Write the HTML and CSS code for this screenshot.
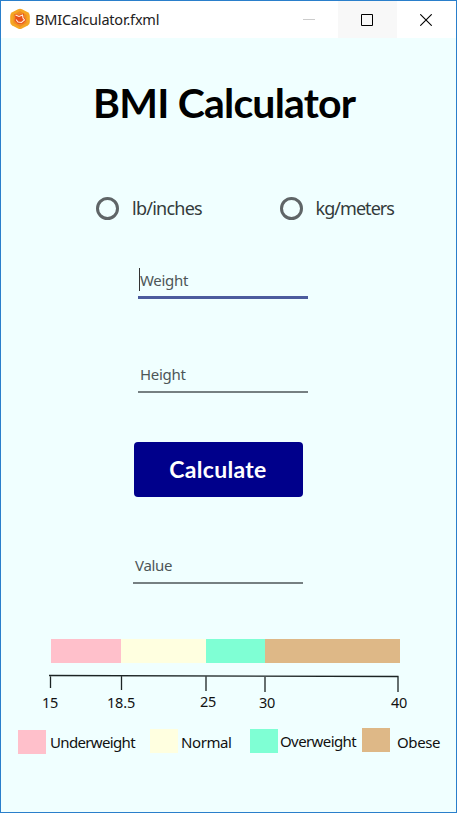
FILE: index.html
```html
<!DOCTYPE html>
<html lang="en">
<head>
<meta charset="utf-8">
<title>BMICalculator.fxml</title>
<link rel="stylesheet" href="styles.css">
</head>
<body>
<div class="window">
  <header class="titlebar">
    <svg class="app-icon" width="22" height="22" viewBox="0 0 22 22">
      <path d="M9 1.2Q11 .2 13 1.2L18.8 4.3Q20.8 5.5 20.8 8V14Q20.8 16.4 18.8 17.6L13 20.6Q11 21.6 9 20.6L3.2 17.6Q1.2 16.4 1.2 14V8Q1.2 5.5 3.2 4.3Z" fill="#f5a623"/>
      <path d="M4.5 7 11 3l6.5 4v8l-6.5 4-6.5-4Z" fill="#f08a24"/>
      <path d="M5.500 6 9.5 7 15 5.5 14.5 8.5 17 12 14 15.5 9 16 5.5 12.5 6.500 10Z" fill="#e84e1b"/>
      <path d="m6.5 7 3.500 1.500 3.500-1.500.5 3 1.500 2-3 2.500-3.500-.5L7 11.500" fill="none" stroke="#fff1dc" stroke-width="1.100"/>
    </svg>
    <span class="caption">BMICalculator.fxml</span>
    <div class="control"><svg width="12" height="12"><path d="M0 5.5h12" stroke="#ccc"/></svg></div>
    <div class="control maximize"><svg width="12" height="12"><path d="M.5.5h11v11H.5Z" fill="none" stroke="#000"/></svg></div>
    <div class="control"><svg width="12" height="12"><path d="m.3.3 11.4 11.4M11.7.3.3 11.7" stroke="#000" stroke-width="1.1"/></svg></div>
  </header>
  <main>
    <h1>BMI Calculator</h1>
    <div class="units">
      <label class="unit"><i class="radio"></i><span class="unit-lb">lb/inches</span></label>
      <label class="unit"><i class="radio"></i><span class="unit-kg">kg/meters</span></label>
    </div>
    <div class="field focused"><i class="caret"></i><span>Weight</span></div>
    <div class="field height"><span>Height</span></div>
    <button class="calculate" type="button">Calculate</button>
    <div class="field value"><span>Value</span></div>
    <div class="scale">
      <i class="under"></i><i class="normal"></i><i class="over"></i><i class="obese"></i>
    </div>
    <svg class="axis" width="457" height="42">
      <path d="M49 2.5 398.5 3.5M50.5 2V15M121.5 2.5V17M206 3V18M265 3V19M398 3V19" fill="none" stroke="#1c2424" stroke-width="1.3"/>
      <g text-anchor="middle">
        <text x="50" y="35">15</text><text x="121" y="35">18.5</text><text x="208" y="34">25</text><text x="267" y="35">30</text><text x="399" y="35">40</text>
      </g>
    </svg>
    <div class="legend">
      <div class="item item-under"><i class="under"></i><span>Underweight</span></div>
      <div class="item item-normal"><i class="normal"></i><span>Normal</span></div>
      <div class="item item-over"><i class="over"></i><span>Overweight</span></div>
      <div class="item item-obese"><i class="obese"></i><span>Obese</span></div>
    </div>
  </main>
</div>
</body>
</html>
```
FILE: styles.css
```css
* { box-sizing: border-box; }
body { margin: 0; font-family: "Noto Sans", "Open Sans", sans-serif; color: #111; }
i { display: block; }
svg { display: block; }
.window { width: 457px; height: 813px; border: 1px solid #2a7fcb; background: #f0ffff; overflow: hidden; }
.titlebar { display: flex; height: 37px; background: #fff; padding-right: 1px; }
.app-icon { margin: 7px 0 0 8px; }
.caption { flex: 1; margin-left: 4px; font-size: 14.5px; line-height: 37px; color: #222; letter-spacing: -0.2px; white-space: nowrap; }
.control { width: 58.5px; display: flex; align-items: center; justify-content: center; }
.maximize { background: #f8f8f8; }
main { margin-left: -1px; width: 457px; }
h1 { margin: 35px 0 0 93px; height: 60px; font: 700 41px/60px Lato, sans-serif; color: #000; letter-spacing: -0.8px; white-space: nowrap; }
.units { display: flex; margin: 63px 0 0 96px; }
.unit { display: flex; flex: none; align-items: center; width: 183.5px; height: 24px; gap: 13px; font-size: 18px; line-height: 24px; color: #333b3b; white-space: nowrap; }
.unit-lb { letter-spacing: -0.75px; }
.unit-kg { letter-spacing: -0.95px; }
.radio { width: 23px; height: 23px; border: 3px solid #5f6567; border-radius: 50%; }
.field { display: flex; width: 170px; height: 32px; margin: 46px 0 0 138px; padding-left: 2px; border-bottom: 2px solid #768082; font-size: 15px; letter-spacing: -0.3px; line-height: 26px; color: #4d5658; position: relative; }
.focused { height: 33px; border-bottom: 3px solid #4c5c9e; line-height: 28px; }
.caret { position: absolute; left: 1px; top: 2px; width: 1px; height: 23px; background: #333; }
.height { margin-top: 62px; }
.calculate { display: block; width: 169px; height: 55px; margin: 49px 0 0 134px; border: 0; border-radius: 4px; background: #00008b; color: #fff; font: 700 23px/54px Lato, sans-serif; letter-spacing: 0.3px; padding: 0 1px 1px 0; }
.value { margin: 55px 0 0 133px; }
.scale { display: flex; height: 24px; margin: 55px 0 0 51px; }
.scale .under { width: 70px; }
.scale .normal { width: 85px; }
.scale .over { width: 59px; }
.scale .obese { width: 135px; }
.under { background: #ffc0cb; }
.normal { background: #ffffe0; }
.over { background: #7fffd4; }
.obese { background: #deb887; }
.axis { margin-top: 10px; font-size: 14.5px; letter-spacing: -0.2px; fill: #111; }
.legend { display: flex; align-items: flex-start; margin: 13px 0 0 18px; font-size: 15px; line-height: 24px; white-space: nowrap; }
.item { display: flex; }
.item > i { width: 28px; height: 24px; }
.item-under { width: 132px; gap: 4px; padding-top: 2px; letter-spacing: -0.65px; }
.item-normal { width: 100px; gap: 3px; padding-top: 1px; letter-spacing: -0.4px; }
.item-over { width: 112px; gap: 2px; padding-top: 1px; letter-spacing: -0.6px; }
.item-obese { gap: 7px; letter-spacing: -0.4px; }
.item-normal span { padding-top: 1px; }
.item-obese span { padding-top: 2px; }
```
